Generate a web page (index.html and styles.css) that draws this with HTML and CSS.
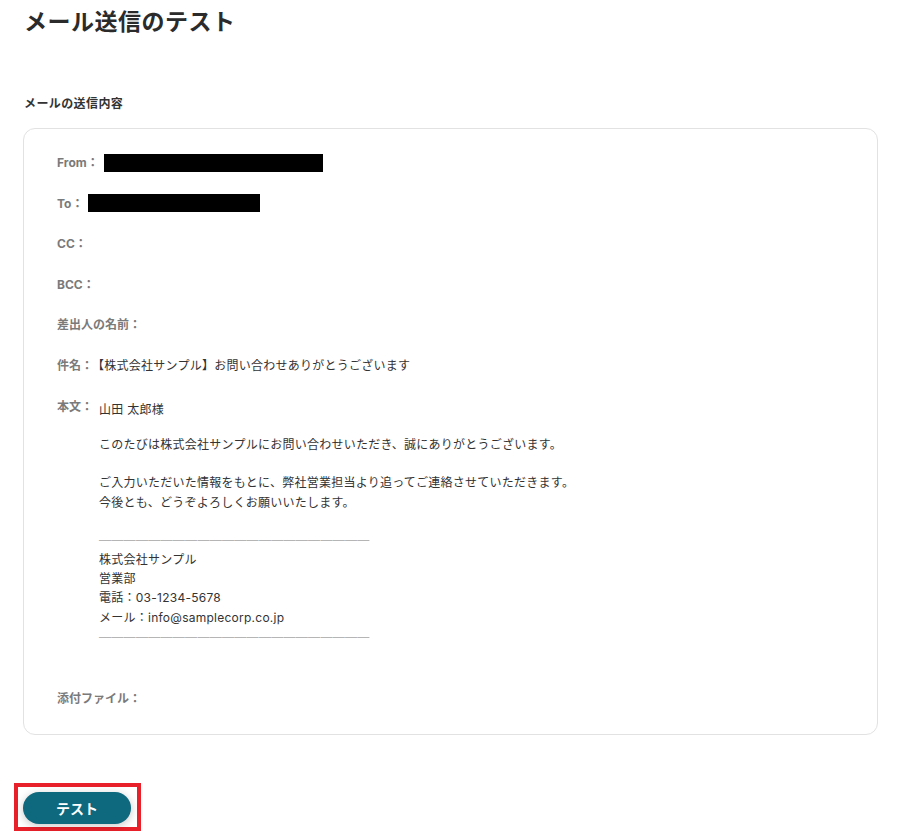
FILE: index.html
```html
<!DOCTYPE html>
<html lang="ja">
<head>
    <meta charset="UTF-8">
    <meta name="viewport" content="width=device-width, initial-scale=1.0">
    <title>メール送信のテスト</title>
    <link rel="stylesheet" href="styles.css">
</head>
<body>
    <div class="page">
        <h1 class="page-title">メール送信のテスト</h1>

        <h2 class="section-title">メールの送信内容</h2>

        <div class="mail-card">
            <div class="mail-row">
                <span class="mail-label">From：</span>
                <span class="redacted redacted-from"></span>
            </div>
            <div class="mail-row">
                <span class="mail-label">To：</span>
                <span class="redacted redacted-to"></span>
            </div>
            <div class="mail-row">
                <span class="mail-label">CC：</span>
            </div>
            <div class="mail-row">
                <span class="mail-label">BCC：</span>
            </div>
            <div class="mail-row">
                <span class="mail-label">差出人の名前：</span>
            </div>
            <div class="mail-row">
                <span class="mail-label">件名：</span>
                <span class="mail-value">【株式会社サンプル】お問い合わせありがとうございます</span>
            </div>
            <div class="mail-row mail-row-body">
                <span class="mail-label">本文：</span>
                <div class="mail-body">
                    <p class="greeting">山田 太郎様</p>
                    <p>このたびは株式会社サンプルにお問い合わせいただき、誠にありがとうございます。</p>
                    <p>ご入力いただいた情報をもとに、弊社営業担当より追ってご連絡させていただきます。<br>今後とも、どうぞよろしくお願いいたします。</p>
                    <p class="signature">
                        <span class="rule">――――――――――――――――――――――</span><br>
                        株式会社サンプル<br>
                        営業部<br>
                        電話：03-1234-5678<br>
                        メール：info@samplecorp.co.jp<br>
                        <span class="rule">――――――――――――――――――――――</span>
                    </p>
                </div>
            </div>
            <div class="mail-row mail-row-attach">
                <span class="mail-label">添付ファイル：</span>
            </div>
        </div>

        <div class="test-frame">
            <button class="test-btn">テスト</button>
        </div>
    </div>
</body>
</html>
```

FILE: styles.css
```css
body {
    margin: 0;
    font-family: Inter, "Noto Sans CJK JP", sans-serif;
    color: #333;
    background: #fff;
}

.page {
    padding: 5px 0 0 23px;
    width: 855px;
}

.page-title {
    margin: 0 0 0 1px;
    font-size: 23px;
    line-height: 34px;
    letter-spacing: 0.5px;
    font-weight: bold;
    color: #2b2b2b;
}

.section-title {
    margin: 55px 0 15px 1px;
    font-size: 12px;
    line-height: 19px;
    letter-spacing: 0.4px;
    font-weight: bold;
    color: #333;
}

.mail-card {
    border: 1px solid #e2e2e2;
    border-radius: 12px;
    padding: 24px 33px 26px 33px;
}

.mail-row {
    display: flex;
    align-items: center;
    gap: 5px;
    min-height: 19px;
    line-height: 19px;
    font-size: 12px;
    margin-bottom: 21.6px;
}

.mail-label {
    font-weight: bold;
    color: #7a7a7a;
    white-space: nowrap;
}

.mail-value {
    color: #333;
    margin-left: -6px;
    letter-spacing: 0.25px;
}

.redacted {
    display: inline-block;
    height: 18px;
    background: #000;
}

.redacted-from {
    width: 219px;
}

.redacted-to {
    width: 172px;
}

.mail-row-body {
    align-items: flex-start;
    gap: 6px;
    margin-bottom: 43px;
}

.mail-body {
    color: #333;
    line-height: 19.3px;
    letter-spacing: 0.25px;
    padding-top: 3px;
}

.mail-body p {
    margin: 0 0 19.3px 0;
}

.mail-body .greeting {
    margin-bottom: 16px;
}

.mail-body .signature {
    margin: -1px 0 0 0;
}

.rule {
    color: #b5b5b5;
    letter-spacing: 0.3px;
}

.mail-row-attach {
    margin-bottom: 0;
}

.test-frame {
    display: inline-block;
    margin: 48px 0 0 -9px;
    padding: 5px 6px 3px 5px;
    border: 4px solid #e8202a;
}

.test-btn {
    display: block;
    width: 108px;
    height: 32px;
    border: none;
    border-radius: 16px;
    background: #0e697f;
    color: #fff;
    font-family: Inter, "Noto Sans CJK JP", sans-serif;
    font-size: 14px;
    font-weight: bold;
    box-shadow: 0 2px 8px rgba(0, 0, 0, 0.22);
    cursor: pointer;
}
```
